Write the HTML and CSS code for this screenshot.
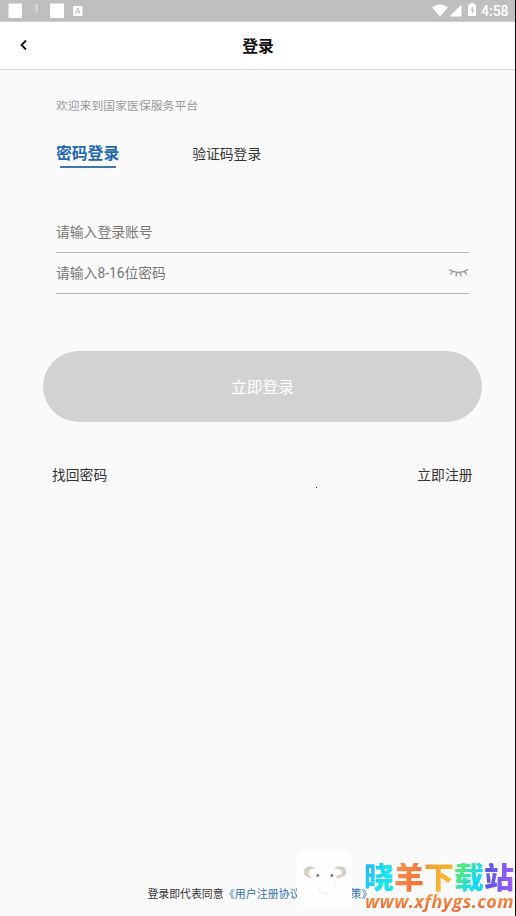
FILE: index.html
```html
<!DOCTYPE html>
<html lang="zh-CN">
<head>
<meta charset="utf-8">
<title>登录</title>
<link rel="stylesheet" href="styles.css">
</head>
<body>
<div class="screen">
  <div class="status">
    <svg class="status-left" width="90" height="21" viewBox="0 0 90 21">
      <rect x="8.500" y="3.500" width="13.500" height="14.500" fill="#fff"/>
      <path d="M36.500 4l2 2-1 1v5h-2V7l-1-1z" fill="#e2e2e2" opacity=".75"/>
      <rect x="50" y="3.500" width="14" height="14.500" fill="#fff"/>
      <rect x="73" y="6" width="9.500" height="10" rx="1" fill="#fff"/>
      <path d="M75.500 13.500l2.300-5.500 2.300 5.500M76.300 12h3" fill="none" stroke="#bbb"/>
    </svg>
    <div class="status-right">
      <svg width="48" height="21" viewBox="0 0 48 21" fill="#fff">
        <path d="M0 7.500Q8 1.500 16 7.500L8 16.500z"/>
        <path d="M29.500 4.500v12H17.500z"/>
        <path d="M38 4.500v-1.500h4v1.500h2v11.500h-8v-11.500z"/>
        <path d="M41 6.500l-2.800 4h1.700v3.500l2.600-4.300h-1.700z" fill="#bfbfbf"/>
      </svg>
      <span class="clock">4:58</span>
    </div>
  </div>
  <header class="header">
    <svg class="back" width="10" height="12" viewBox="0 0 10 12"><path d="M7 1.500L2.500 6 7 10.500" fill="none" stroke="#111" stroke-width="1.800"/></svg>
    <h1>登录</h1>
  </header>
  <main>
    <p class="welcome">欢迎来到国家医保服务平台</p>
    <nav class="tabs">
      <span class="tab active">密码登录</span>
      <span class="tab">验证码登录</span>
    </nav>
    <div class="field first">请输入登录账号</div>
    <div class="field">
      <span>请输入8-16位密码</span>
      <svg width="21" height="10" viewBox="0 0 21 10" fill="none" stroke="#949494" stroke-width="1.300"><path d="M1 1.500Q10.500 7.500 20 1.500M4.500 3.500L2.500 6.500M8.500 5L8 8.500M12.500 5l.7 3.500M16.500 3.500l2.200 3"/></svg>
    </div>
    <div class="submit">立即登录</div>
    <div class="links"><span>找回密码</span><i class="dot"></i><span>立即注册</span></div>
  </main>
  <footer class="agreement">登录即代表同意<span>《用户注册协议》《隐私政策》</span></footer>
  <div class="watermark">
    <svg class="sheep" width="56" height="58" viewBox="0 0 56 58" fill="none">
      <rect width="55" height="58" rx="9" fill="#fefefe"/>
      <path d="M20.500 19.500Q13 13.500 8 18.500Q3.500 26 15.500 28.500Q9 23.500 13 20Q16.500 17.500 20.500 19.500Z" fill="#d6d0c5"/>
      <path d="M36 19.500Q43 13.500 48 18Q53 26 40.500 28.500L39 26Q47.500 24.500 44 20.500Q40.500 17.500 36 19.500Z" fill="#d6d0c5"/>
      <path d="M18 33Q22 38 24 43M39 30Q39 36 35 40M25 42l3 2 4-2M28.500 44v3" stroke="#f1efed"/>
      <circle cx="20.800" cy="25.500" r="1.400" fill="#777"/><circle cx="34.800" cy="25.500" r="1.400" fill="#777"/>
    </svg>
    <div class="brand">
      <div class="brand-name"><b class="c1">晓</b><b class="c2">羊</b><b class="c3">下</b><b class="c4">载</b><b class="c5">站</b></div>
      <div class="brand-url">www.xfhygs.com</div>
    </div>
  </div>
</div>
</body>
</html>
```
FILE: styles.css
```css
* { box-sizing: border-box; }
body { margin: 0; font-family: Roboto, "Noto Sans CJK SC", sans-serif; }
.screen {
  position: relative;
  width: 516px;
  height: 916px;
  overflow: hidden;
  background: #fafafa;
  border-right: 1px solid #080808;
  display: flex;
  flex-direction: column;
}
.status { height: 22px; background: #bfbfbf; display: flex; justify-content: space-between; border-bottom: 1px solid #cecece; }
.status-right { display: flex; padding-right: 6px; gap: 1px; }
.clock { color: #fff; font-size: 14px; font-weight: 500; line-height: 22px; width: 28px; white-space: nowrap; }
.header { height: 48px; background: #fff; border-bottom: 1px solid #d8d8d8; display: grid; grid-template-columns: 40px 1fr 40px; align-items: center; }
.back { margin: -2px 0 0 19px; }
h1 { margin: 0; font-size: 15.800px; line-height: 24px; font-weight: 700; text-align: center; color: #111; padding: 3px 0 0 1px; }
main { display: flex; flex-direction: column; padding: 27px 33px 0 43px; }
.welcome { margin: 0 13px; font-size: 11.850px; line-height: 18px; color: #999; }
.tabs { display: flex; align-items: flex-start; margin: 25px 13px 0; height: 28px; }
.tab { font-size: 13.800px; line-height: 29px; color: #333; }
.tab.active { font-size: 15.800px; line-height: 27px; font-weight: 700; color: #2367b4; margin-right: 73px; height: 28px; background: linear-gradient(#3b78ba, #3b78ba) 4px 100% / 56px 2px no-repeat; }
.field { margin: 0 13px; height: 41px; padding-bottom: 3px; border-bottom: 1px solid #b5b5b5; display: flex; align-items: center; justify-content: space-between; font-size: 13.800px; color: #777; }
.field svg { margin-top: 3px; }
.first { margin-top: 44px; }
.submit { margin-top: 57px; height: 71px; width: 439px; border-radius: 36px; background: #d1d2d4; color: #fff; text-align: center; font-size: 15.800px; line-height: 73px; }
.links { display: flex; justify-content: space-between; margin: 43px 9.500px 0 9px; font-size: 13.800px; line-height: 20px; color: #333; }
.dot { width: 1px; height: 1px; background: #333; margin: 22px 0 0 108px; }
.agreement { margin: auto 0 12px 147.500px; font-size: 10.880px; line-height: 18px; color: #333; white-space: nowrap; }
.agreement span { color: #3270b5; letter-spacing: .15px; }
.watermark { position: absolute; left: 297px; top: 850px; display: flex; gap: 11px; }
.brand { width: 151px; padding-top: 13px; }
.brand-name { display: flex; font-size: 30px; line-height: 30px; font-weight: 700; }
.brand-name b { color: transparent; background-clip: text; -webkit-background-clip: text; }
.c1 { background-image: linear-gradient(120deg, #2baef5, #16e5ee 60%); }
.c2 { background-image: linear-gradient(120deg, #fa9650, #ef662c); }
.c3 { background-image: linear-gradient(120deg, #f09a35, #ffc52f); }
.c4 { background-image: linear-gradient(120deg, #55e883 25%, #12dbf3 65%); }
.c5 { background-image: linear-gradient(90deg, #5656e6, #a05bf7); }
.brand-url { font: italic 700 18px/22px "Open Sans", sans-serif; letter-spacing: .42px; color: transparent; background: linear-gradient(#f5a04d 15%, #ec6a31 85%); background-clip: text; -webkit-background-clip: text; white-space: nowrap; margin: -3px 0 0 1px; }
```
